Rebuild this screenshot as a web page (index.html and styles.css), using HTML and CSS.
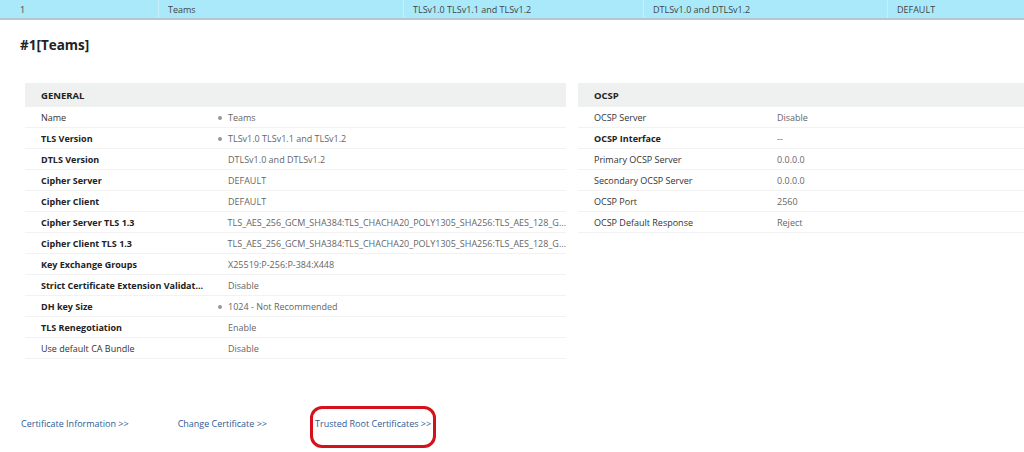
FILE: index.html
```html
<!DOCTYPE html>
<html>
<head>
<meta charset="utf-8">
<link rel="stylesheet" href="styles.css">
</head>
<body>
<div class="topbar">
  <div class="cell c1">1</div>
  <div class="cell c2">Teams</div>
  <div class="cell c3">TLSv1.0 TLSv1.1 and TLSv1.2</div>
  <div class="cell c4">DTLSv1.0 and DTLSv1.2</div>
  <div class="cell c5">DEFAULT</div>
</div>
<h1 class="title">#1[Teams]</h1>
<div class="panels">
  <div class="panel general">
    <div class="phead">GENERAL</div>
    <div class="row"><span class="lbl">Name</span><span class="val dot">Teams</span></div>
    <div class="row"><span class="lbl b">TLS Version</span><span class="val dot">TLSv1.0 TLSv1.1 and TLSv1.2</span></div>
    <div class="row"><span class="lbl b">DTLS Version</span><span class="val">DTLSv1.0 and DTLSv1.2</span></div>
    <div class="row"><span class="lbl b">Cipher Server</span><span class="val">DEFAULT</span></div>
    <div class="row"><span class="lbl b">Cipher Client</span><span class="val">DEFAULT</span></div>
    <div class="row"><span class="lbl b">Cipher Server TLS 1.3</span><span class="val">TLS_AES_256_GCM_SHA384:TLS_CHACHA20_POLY1305_SHA256:TLS_AES_128_G...</span></div>
    <div class="row"><span class="lbl b">Cipher Client TLS 1.3</span><span class="val">TLS_AES_256_GCM_SHA384:TLS_CHACHA20_POLY1305_SHA256:TLS_AES_128_G...</span></div>
    <div class="row"><span class="lbl b">Key Exchange Groups</span><span class="val">X25519:P-256:P-384:X448</span></div>
    <div class="row"><span class="lbl b">Strict Certificate Extension Validat...</span><span class="val">Disable</span></div>
    <div class="row"><span class="lbl b">DH key Size</span><span class="val dot">1024 - Not Recommended</span></div>
    <div class="row"><span class="lbl b">TLS Renegotiation</span><span class="val">Enable</span></div>
    <div class="row"><span class="lbl">Use default CA Bundle</span><span class="val">Disable</span></div>
  </div>
  <div class="panel ocsp">
    <div class="phead">OCSP</div>
    <div class="row"><span class="lbl">OCSP Server</span><span class="val">Disable</span></div>
    <div class="row"><span class="lbl b">OCSP Interface</span><span class="val">--</span></div>
    <div class="row"><span class="lbl">Primary OCSP Server</span><span class="val">0.0.0.0</span></div>
    <div class="row"><span class="lbl">Secondary OCSP Server</span><span class="val">0.0.0.0</span></div>
    <div class="row"><span class="lbl">OCSP Port</span><span class="val">2560</span></div>
    <div class="row"><span class="lbl">OCSP Default Response</span><span class="val">Reject</span></div>
  </div>
</div>
<div class="links">
  <a class="link l1">Certificate Information &gt;&gt;</a>
  <a class="link l2">Change Certificate &gt;&gt;</a>
  <span class="circled"><a class="link">Trusted Root Certificates &gt;&gt;</a></span>
</div>
</body>
</html>
```
FILE: styles.css
```css
html, body {
  margin: 0;
  padding: 0;
  background: #fff;
  font-family: "Open Sans", "DejaVu Sans", sans-serif;
  font-size: 9px;
  color: #333;
  width: 1024px;
  height: 452px;
  overflow: hidden;
}

.topbar {
  display: flex;
  height: 18px;
  background: #a9e9fa;
  border-bottom: 2px solid #b6c4d4;
  color: #444;
  font-size: 9px;
}
.cell {
  display: flex;
  align-items: center;
  box-sizing: border-box;
  border-right: 1px solid #c6eff9;
  padding-left: 9px;
}
.c1 { width: 159px; padding-left: 20px; }
.c2 { width: 245px; }
.c3 { width: 240px; }
.c4 { width: 244px; }
.c5 { flex: 1; border-right: none; }

.title {
  margin: 15px 0 0 20px;
  font-size: 13.5px;
  font-weight: 700;
  color: #222;
  line-height: 20px;
  height: 20px;
}

.panels {
  display: grid;
  grid-template-columns: 541px 446px;
  column-gap: 12px;
  margin: 28px 0 0 25px;
}

.phead {
  height: 24px;
  background: #eef1ef;
  display: flex;
  align-items: center;
  padding-left: 16px;
  font-weight: 700;
  color: #222;
  font-size: 9.5px;
}

.row {
  display: flex;
  align-items: center;
  height: 21px;
  padding-top: 1px;
  border-bottom: 1px solid #f1f2f1;
  box-sizing: border-box;
}
.lbl {
  padding-left: 16px;
  box-sizing: border-box;
  color: #333;
  white-space: nowrap;
  overflow: hidden;
}
.general .lbl { width: 203px; }
.ocsp .lbl { width: 199px; }
.lbl.b { font-weight: 700; color: #222; }
.val {
  color: #666;
  white-space: nowrap;
  position: relative;
}
.val.dot::before {
  content: "";
  position: absolute;
  left: -10px;
  top: 50%;
  margin-top: -1.5px;
  width: 4px;
  height: 4px;
  border-radius: 50%;
  background: #8d9aa5;
}

.links {
  display: flex;
  align-items: baseline;
  margin-top: 47px;
  padding-left: 21px;
}
.link {
  color: #2d5b95;
  font-size: 9px;
  white-space: nowrap;
}
.l1 { margin-right: 49px; }
.l2 { margin-right: 43px; }
.circled {
  display: inline-flex;
  align-items: center;
  height: 28px;
  padding: 0 2px 8px 2px;
  border: 3px solid #d4111c;
  border-radius: 12px;
}
```
